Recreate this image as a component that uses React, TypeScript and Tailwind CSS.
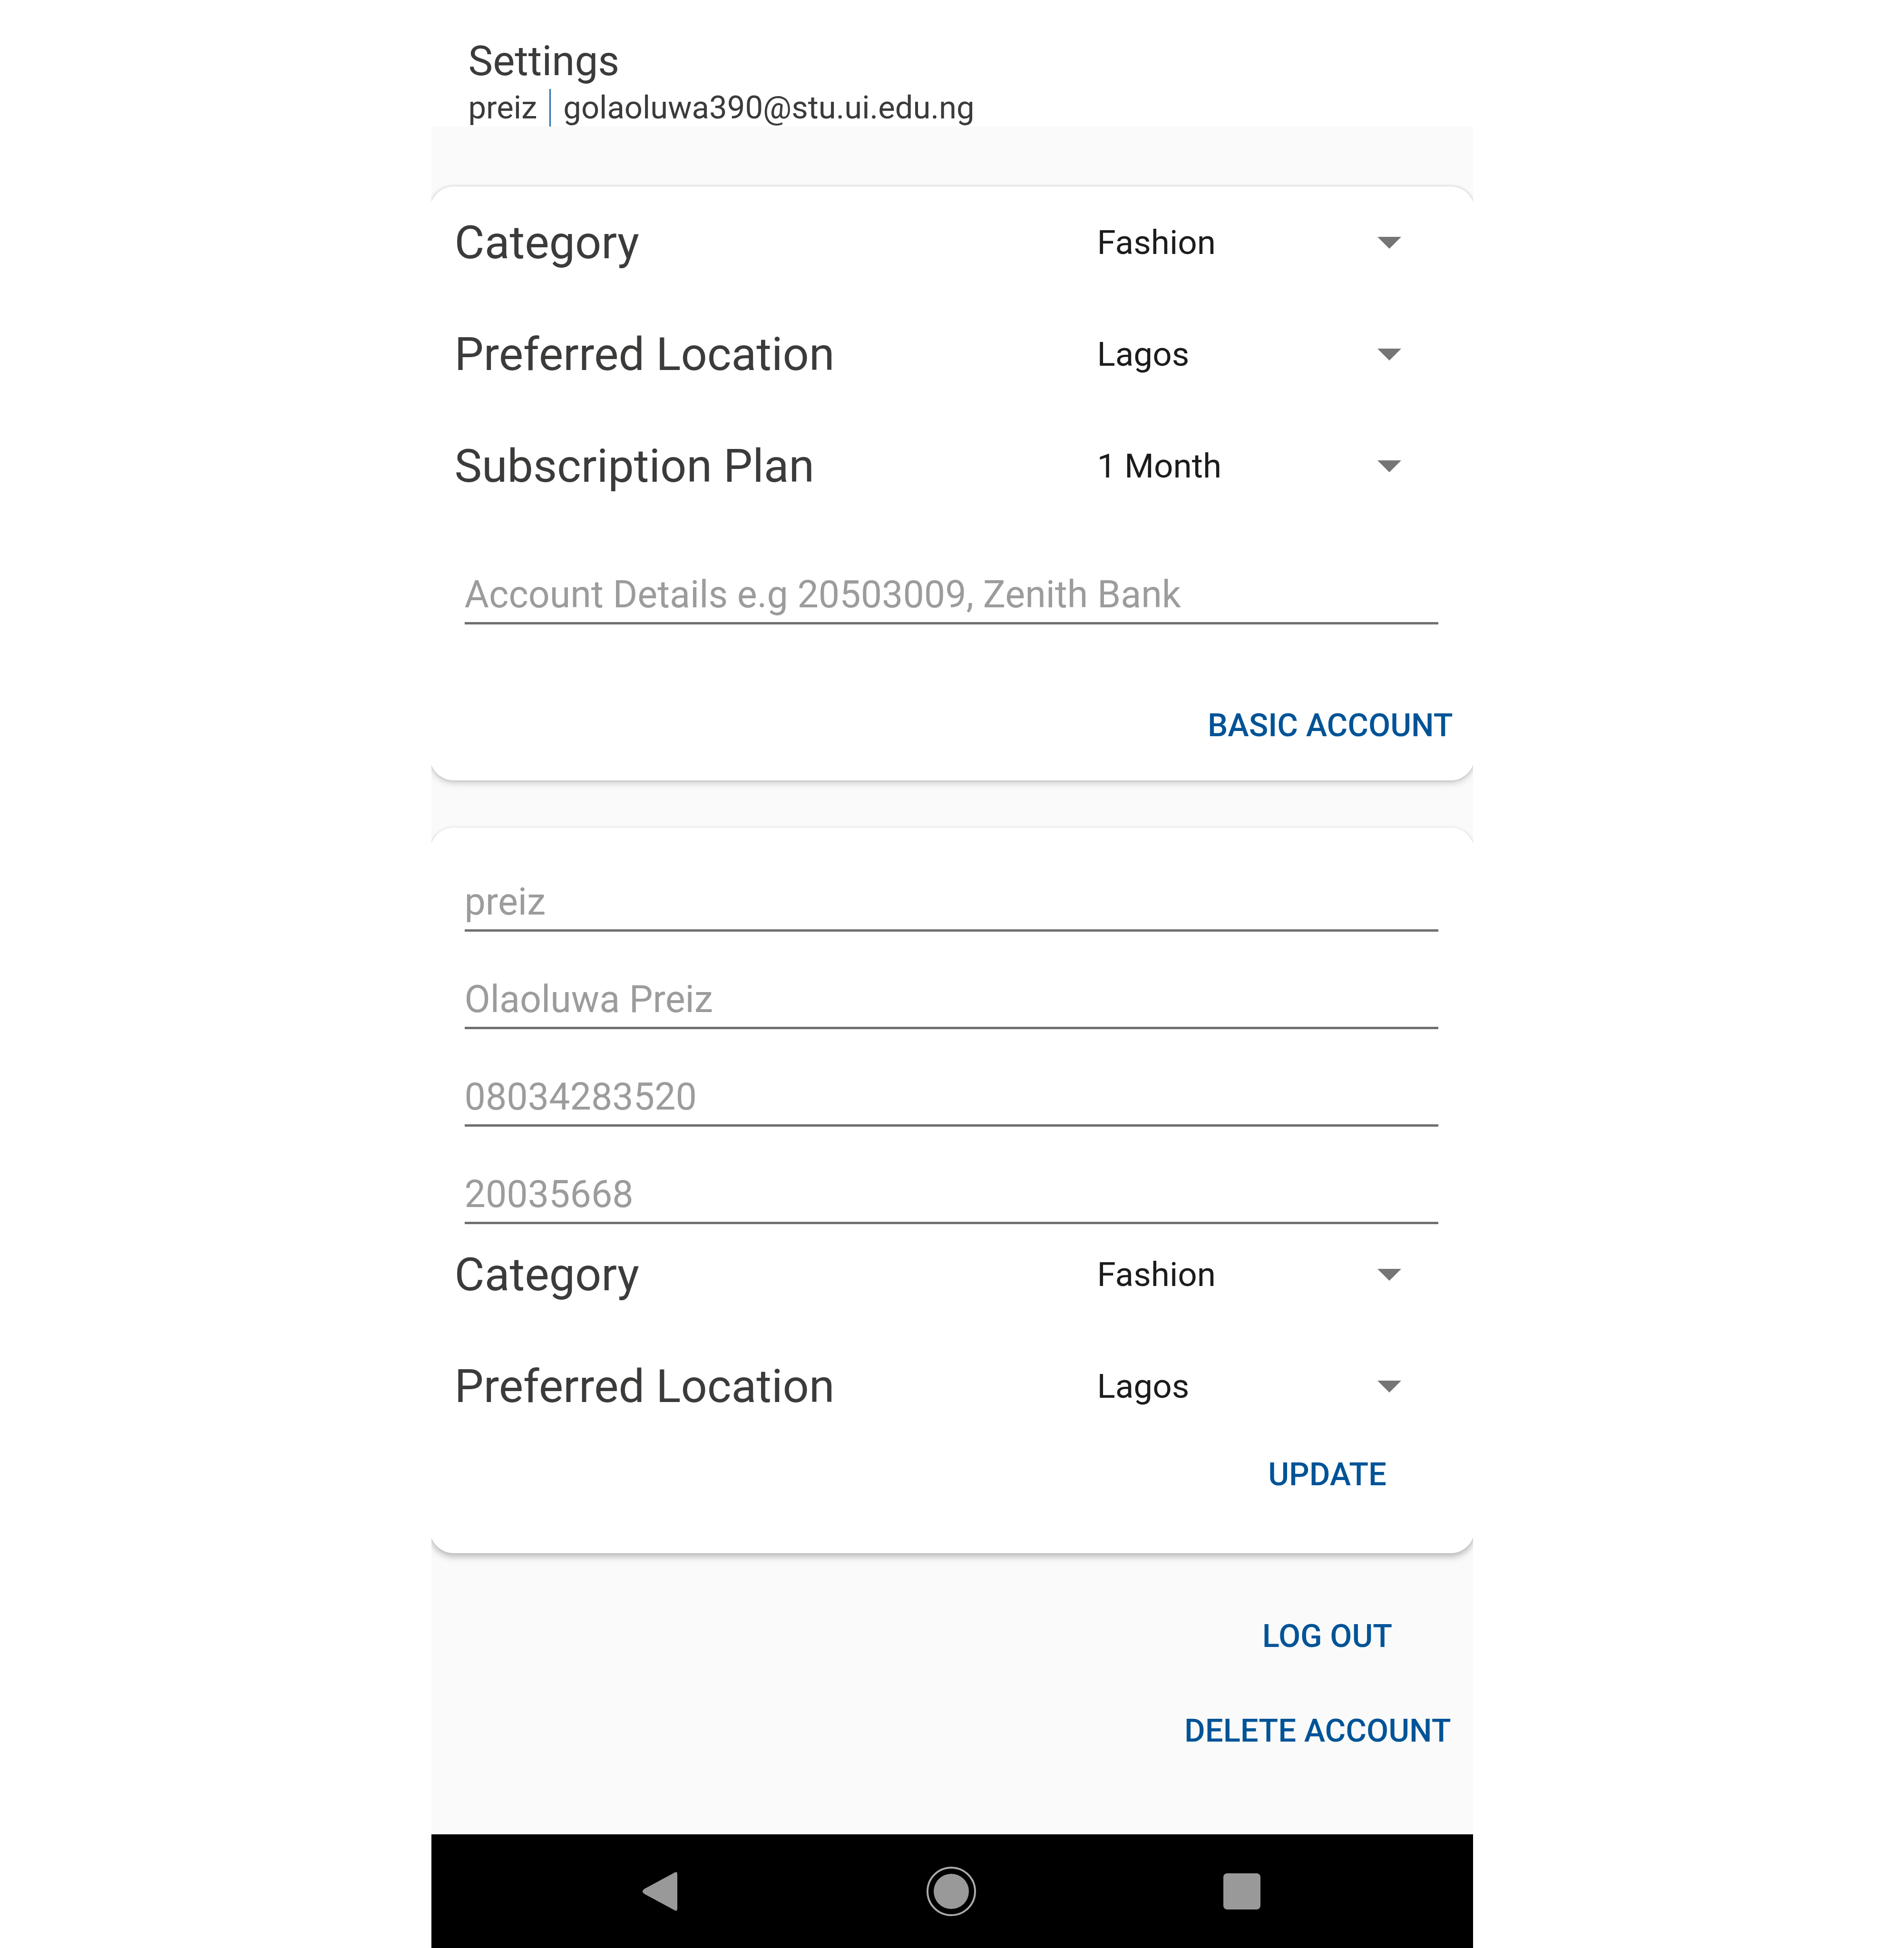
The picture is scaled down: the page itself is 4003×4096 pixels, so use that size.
import React, { useId } from "react";

function SelectRow({ label, options }: { label: string; options: string[] }) {
  const id = useId();
  return (
    <div className="flex h-[235px] items-center pl-[49px] pr-[53px]">
      <label htmlFor={id} className="flex-1 text-[97px] leading-[112px] text-[#3c3b3a]">
        {label}
      </label>
      <div className="relative w-[737px]">
        <select
          id={id}
          className="h-[120px] w-full appearance-none bg-transparent text-[71px] leading-[84px] text-[#1c1c1c] outline-none"
        >
          {options.map((o) => (
            <option key={o}>{o}</option>
          ))}
        </select>
        <svg
          viewBox="0 0 50 25"
          className="pointer-events-none absolute right-[98px] top-[48px] h-[25px] w-[50px] fill-[#757575]"
          aria-hidden="true"
        >
          <path d="M0 0h50L25 25z" />
        </svg>
      </div>
    </div>
  );
}

function Field({ label }: { label: string }) {
  return (
    <input
      type="text"
      aria-label={label}
      placeholder={label}
      className="block h-[121px] w-full border-b-5 border-[#707070] bg-transparent text-[79px] leading-[92px] text-[#3c3b3a] outline-none placeholder:text-[#9c9c9c]"
    />
  );
}

function TextButton({ children }: { children: React.ReactNode }) {
  return (
    <button
      type="button"
      className="block h-[96px] min-w-[468px] text-center text-[67px] font-medium leading-[96px] text-[#005397]"
    >
      {children}
    </button>
  );
}

const categories = ["Fashion", "Food", "Electronics"];
const locations = ["Lagos", "Ibadan", "Abuja"];
const plans = ["1 Month", "3 Months", "1 Year"];

export default function App() {
  return (
    <div className="min-h-screen bg-white font-[Roboto,sans-serif]">
      <div className="mx-auto flex min-h-screen w-full max-w-[2190px] flex-col overflow-hidden bg-[#fafafa]">
        <header className="h-[266px] bg-white pl-[78px] pt-[78px] text-[#3c3b3a]">
          <h1 className="text-[87px] leading-[100px]">Settings</h1>
          <div className="flex items-center pt-[8px] text-[67px] leading-[80px]">
            <span>preiz</span>
            <span className="ml-[26px] mr-[26px] h-[79px] w-[3px] bg-[#2c6fa8]" />
            <span>golaoluwa390@stu.ui.edu.ng</span>
          </div>
        </header>

        <main className="flex-1 pt-[126px]">
          <section className="-mx-[3px] rounded-[50px] bg-white px-[3px] shadow-[0_6px_14px_rgba(0,0,0,0.17),0_0_6px_rgba(0,0,0,0.16)]">
            <SelectRow label="Category" options={categories} />
            <SelectRow label="Preferred Location" options={locations} />
            <SelectRow label="Subscription Plan" options={plans} />
            <div className="pl-[70px] pr-[73px] pt-[95px]">
              <Field label="Account Details e.g 20503009, Zenith Bank" />
            </div>
            <div className="flex justify-end pb-[68px] pr-[42px] pt-[164px]">
              <TextButton>BASIC ACCOUNT</TextButton>
            </div>
          </section>

          <section className="-mx-[3px] mt-[99px] rounded-[50px] bg-white px-[3px] shadow-[0_8px_14px_rgba(0,0,0,0.24),0_0_4px_rgba(0,0,0,0.12)]">
            <div className="flex flex-col gap-[84px] pl-[70px] pr-[73px] pt-[98px]">
              <Field label="preiz" />
              <Field label="Olaoluwa Preiz" />
              <Field label="08034283520" />
              <Field label="20035668" />
            </div>
            <div className="-mt-3">
              <SelectRow label="Category" options={categories} />
              <SelectRow label="Preferred Location" options={locations} />
            </div>
            <div className="flex justify-end pb-[118px] pr-[72px] pt-[20px]">
              <TextButton>UPDATE</TextButton>
            </div>
          </section>

          <div className="flex flex-col items-end gap-[103px] pt-[126px]">
            <div className="pr-[72px]">
              <TextButton>LOG OUT</TextButton>
            </div>
            <div className="pr-[46px]">
              <TextButton>DELETE ACCOUNT</TextButton>
            </div>
          </div>
        </main>

        <nav className="flex h-[239px] items-center justify-center gap-[507px] bg-black pr-[4px]">
          <button type="button" aria-label="Back">
            <svg viewBox="0 0 104 104" className="size-[104px] fill-[#999]">
              <path d="M82 12Q87 9 87 17V87Q87 95 82 92L19 58Q9 52 19 46Z" />
            </svg>
          </button>
          <button type="button" aria-label="Home">
            <svg viewBox="0 0 104 104" className="size-[104px] fill-[#999]">
              <circle cx="52" cy="52" r="37" />
              <circle cx="52" cy="52" r="50" fill="none" stroke="#aaa" strokeWidth="4" />
            </svg>
          </button>
          <button type="button" aria-label="Recent apps">
            <svg viewBox="0 0 104 104" className="size-[104px] fill-[#999]">
              <rect x="13" y="14" width="78" height="76" rx="8" />
            </svg>
          </button>
        </nav>
      </div>
    </div>
  );
}
